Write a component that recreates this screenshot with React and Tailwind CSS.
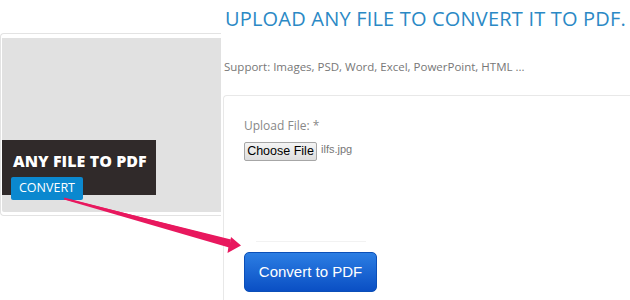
export default function App() {
  return (
    <div className="relative w-[630px] h-[300px] overflow-hidden bg-white" style={{ fontFamily: '"Open Sans", sans-serif' }}>
      <div className="flex h-full">
        {/* left card */}
        <div className="w-[223px] shrink-0 pt-[33px]">
          <div className="h-[183px] w-[221px] border-t border-l border-b border-[#e3e3e3] rounded-l-[4px] pl-[1px] pt-[4px] pb-[3px]">
            <div className="h-full bg-[#e1e1e1] flex flex-col justify-end pb-[17px] rounded-bl-[2px]">
              <div className="w-[154px] h-[55px] bg-[#302a2a] pl-[9px] pt-[11px]">
                <div className="pl-[2px] text-white font-extrabold text-[16px] leading-[20px] tracking-[0.05px] whitespace-nowrap" style={{ textShadow: '0 0 1px rgba(0,0,0,0.6)' }}>ANY FILE TO PDF</div>
                <div className="mt-[6px] inline-flex items-center justify-center w-[72px] h-[23px] bg-[#0b88cf] rounded-[2px] text-white text-[12.5px] leading-none">CONVERT</div>
              </div>
            </div>
          </div>
        </div>
        {/* right column */}
        <div className="flex-1 flex flex-col">
          <div className="pl-[2px] pt-[5px] text-[20px] leading-[28px] tracking-[0.19px] text-[#2b89c5] whitespace-nowrap">UPLOAD ANY FILE TO CONVERT IT TO PDF.</div>
          <div className="pl-[1px] mt-[26px] text-[11.5px] leading-[16px] text-[#777] whitespace-nowrap">Support: Images, PSD, Word, Excel, PowerPoint, HTML ...</div>
          <div className="mt-[20px] flex-1 border-t border-l border-[#e8e8e8] rounded-tl-[4px] pl-[20px] pt-[21px]">
            <div className="text-[12px] leading-[18px] text-[#888]">Upload File: *</div>
            <div className="mt-[7px] flex items-start gap-[4px]" style={{ fontFamily: '"Liberation Sans", Arial, sans-serif' }}>
              <div className="w-[73px] h-[19px] border border-[#a6a6a6] rounded-[2px] bg-[linear-gradient(#f4f4f4,#dedede)] text-[12.5px] leading-[17px] text-black text-center whitespace-nowrap">Choose File</div>
              <div className="text-[11px] leading-[12px] text-[#777] mt-[1px]">ilfs.jpg</div>
            </div>
            <div className="mt-[80px] ml-[12px] w-[110px] h-px bg-[#f2f2f2]"></div>
            <div className="mt-[10px] w-[133px] h-[40px] rounded-[5px] bg-[linear-gradient(#2c7ee3,#0a4fc4)] border border-[#0b4fb8] flex items-center justify-center text-white text-[15px]" style={{ fontFamily: '"Liberation Sans", Arial, sans-serif' }}>Convert to PDF</div>
          </div>
        </div>
      </div>
      {/* annotation arrow */}
      <svg className="absolute left-0 top-0 pointer-events-none" width="630" height="300" viewBox="0 0 630 300">
        <polygon points="64,197.5 229.5,240 227.5,253 241,245.5 231,237 230,242.8 65,199.5" fill="#e8185e" />
        <polygon points="64,198 231,239.5 229,247.5 64,199.5" fill="#e8185e" />
      </svg>
    </div>
  );
}
